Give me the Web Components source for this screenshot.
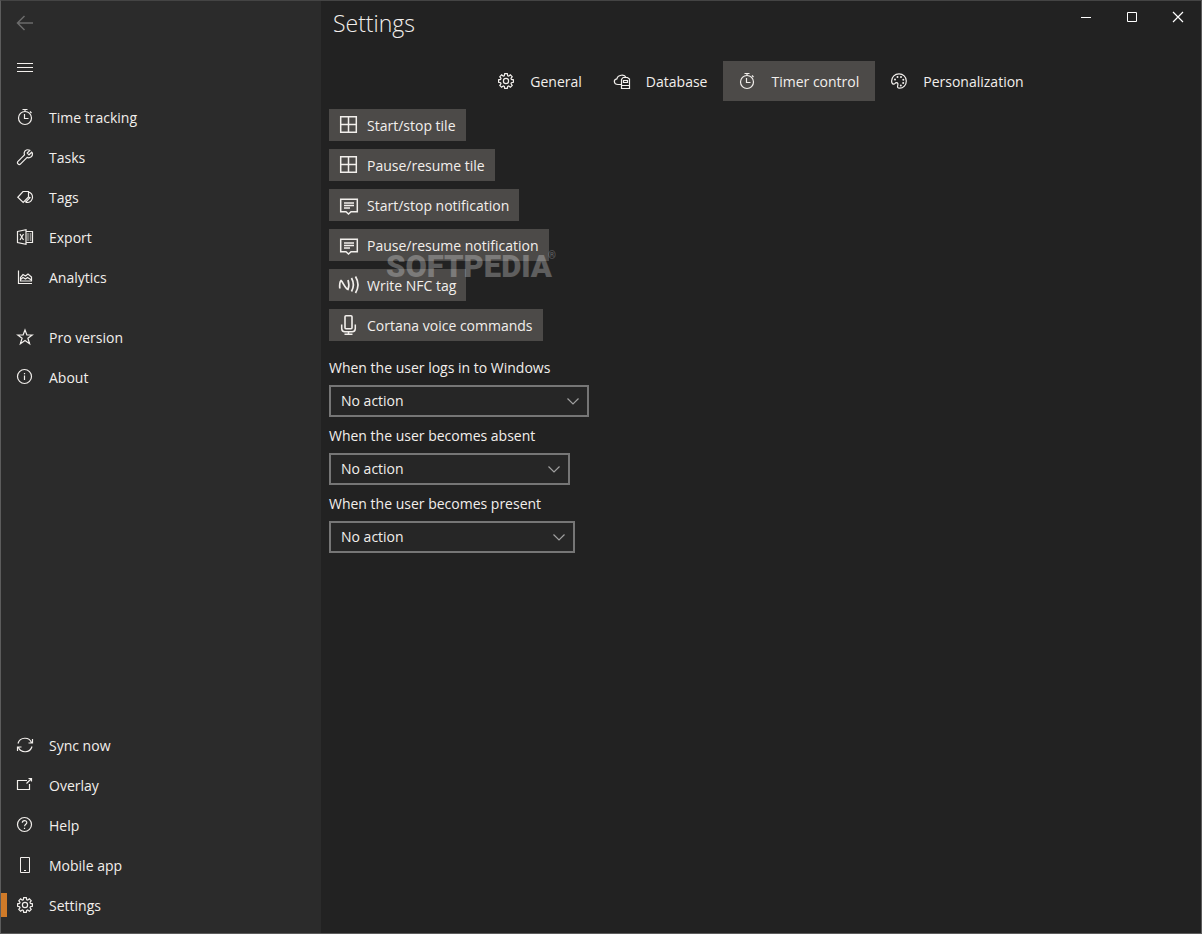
<!DOCTYPE html>
<html lang="en">
<head>
<meta charset="utf-8">
<meta name="viewport" content="width=device-width, initial-scale=1">
<title>Settings</title>
<style>
  body {
    margin: 0;
    color: #f2efec;
    font: 14px/20px "Open Sans", "Noto Sans", sans-serif;
  }
</style>
</head>
<body>

<time-app>
  <side-bar slot="side">
    <nav-item icon="clock">Time tracking</nav-item>
    <nav-item icon="wrench">Tasks</nav-item>
    <nav-item icon="tags">Tags</nav-item>
    <nav-item icon="excel">Export</nav-item>
    <nav-item icon="chart">Analytics</nav-item>
    <nav-item icon="star" class="gap">Pro version</nav-item>
    <nav-item icon="info">About</nav-item>

    <nav-item slot="bottom" icon="sync">Sync now</nav-item>
    <nav-item slot="bottom" icon="overlay">Overlay</nav-item>
    <nav-item slot="bottom" icon="help">Help</nav-item>
    <nav-item slot="bottom" icon="phone">Mobile app</nav-item>
    <nav-item slot="bottom" icon="gear" selected>Settings</nav-item>
  </side-bar>

  <title-bar>Settings</title-bar>

  <tab-bar>
    <tab-item icon="gear">General</tab-item>
    <tab-item icon="database">Database</tab-item>
    <tab-item icon="clock" selected>Timer control</tab-item>
    <tab-item icon="palette">Personalization</tab-item>
  </tab-bar>

  <timer-settings></timer-settings>
</time-app>

<script>

const icons = {
  back: `<path stroke-width="1.500" d="M.5 8H16M7.500 1 .5 8l7 7"/>`,
  menu: `<path stroke-width="1" d="M0 4.500h16M0 8.500h16M0 12.500h16"/>`,
  clock: `<circle cx="8" cy="9" r="6.500"/><path d="M5.500.5h5M8 .5v2M13 2.500l1.500 1.500M7.500 5v4.500h4"/>`,
  wrench: `<path d="M14.700 3.200 12 5.800 10.200 4l2.600-2.700C10.500.1 8 1 7.300 3.300c-.2.9-.1 1.700.2 2.500L1 12.300c-.8.8-.7 1.900 0 2.600s1.900.7 2.600 0l6.500-6.500c2.700 1.200 5.700-.9 5.400-3.600-.1-.6-.3-1.100-.8-1.600z"/>`,
  tags: `<path d="M6 2.500h5.500V8l-5.300 5.500L.8 8.300zM11.500 3c2.200.6 4 2.800 4 5.300 0 2.800-2.200 5-4.600 5.200-1.100 0-2-.3-2.600-1M11.500 8l1.500.7-4.300 4.400"/>`,
  excel: `<path d="M.5 2.500 9 .7v14.600L.5 13.500zM9 2.500h6.500v11H9"/><path d="M3 5l3.500 6M6.500 5 3 11"/><path stroke-width="1.500" opacity=".5" d="M11 4v8M13.500 4v8"/>`,
  chart: `<path d="M1.500 1.500v13H15M3.500 12V8.500L6 5.500 8.500 7 11 5l3.500 3v4z"/><path d="M3.500 10.500 6 8.500l2.500 1.500 2-1.500 4 2.500"/>`,
  star: `<path d="M8 1l1.900 5h5.300l-4.300 3.300 1.700 5.500L8 11.500l-4.600 3.300 1.700-5.500L.8 6h5.300z"/>`,
  info: `<circle cx="7.500" cy="7.500" r="7"/><path d="M7.500 6.500V11M7.500 4v1.200"/>`,
  sync: `<path d="M1 6.500A7.200 7.200 0 0 1 14.700 6M15.500 2v4h-4M15 9.500A7.200 7.200 0 0 1 1.300 10M.5 14v-4h4"/>`,
  overlay: `<path d="M10 3.500H.5v9h12V7M9.500 6.500l5-5M11.500 1.500h3v3"/>`,
  help: `<circle cx="7.500" cy="7.500" r="7"/><path d="M5.300 5.800c.1-3 4.600-2.800 4.500-.1-.1 1.500-2.200 1.800-2.200 3.600M7.500 10.800V12"/>`,
  phone: `<path stroke-width="1" d="M3.500.5h9v15h-9zM7 13.500h2"/>`,
  gear: `<circle cx="8" cy="8" r="2.600"/><path d="M6.700.7h2.600l.4 2 1 .4 1.700-1.200 1.800 1.800-1.200 1.700.4 1 2 .4v2.500l-2 .4-.4 1 1.200 1.700-1.800 1.800-1.700-1.200-1 .4-.4 2H6.700l-.4-2-1-.4-1.700 1.200-1.800-1.800L3 10.700l-.4-1-2-.4V6.800l2-.4.4-1-1.200-1.700 1.800-1.800 1.700 1.200 1-.4z"/>`,
  database: `<path d="M7 11.500H4C-.5 11.500-.8 6.600 2.900 5.900 3.700 1.800 10.500.8 12 4.500M9 4.500h4.500L15.500 6v9.500h-8v-9L9 4.500M7.500 12.500h8M9.500 7.500h4v2h-4z"/>`,
  palette: `<path d="M8 .8c4.100 0 7.300 3 7.300 7.100 0 4.200-3 7.300-6.600 7.300-2.200 0-2.400-1-2-2.500.5-1.800.3-3.100-1.300-3.100-1.700 0-1.200 1.900-2.900 1.600C.9 10.900.6 9.500.6 8 .7 3.800 3.900.8 8 .8z"/><g fill="currentColor" stroke="none"><circle cx="4" cy="6.500" r="1"/><circle cx="6.500" cy="4" r="1"/><circle cx="10" cy="4" r="1"/><circle cx="12.300" cy="6.700" r="1"/><circle cx="12.200" cy="10" r="1"/><circle cx="9.800" cy="12.500" r="1"/></g>`,
  tile: `<path stroke-width="1.500" d="M1.700 1.700h15.600v15.600H1.700zM9.500 2v15M2 9.500h15"/>`,
  message: `<path stroke-width="1.500" d="M1.700 4.200h16.600v12.500H12L9.500 19 7 16.700H1.700zM5 8h10M5 10.500h10M5 13h6"/>`,
  nfc: `<path stroke-width="1.700" d="M.8 13.500C.5 10 1 6.500 2 5.500c2 1.500 4 8 7 9C10 12 10 8 9 5M12.500 3c2.200 4 2.200 9.500 0 13.500M16.500 1.500c3 5 3 11.500 0 16.500"/>`,
  mic: `<rect stroke-width="1.600" x="6" y=".8" width="7" height="13" rx="1"/><path stroke-width="1.500" d="M2.700 9.500v4c0 2 1 3.200 3 3.200h7.600c2 0 3-1.200 3-3.200v-4M9.500 17v2M5.500 19.200h8"/>`,
  minimize: `<path stroke-width="1" d="M0 5.500h10"/>`,
  maximize: `<path stroke-width="1" d="M.5.5h9v9h-9z"/>`,
  close: `<path d="M0 0l10 10M10 0 0 10"/>`,
  chevron: `<path d="M.5.5 6 6l5.500-5.500"/>`
};

// width and height of the drawing area, 16 by 16 when not listed
const sizes = {
  tile: [20, 20],
  message: [20, 20],
  nfc: [20, 20],
  mic: [20, 20],
  minimize: [10, 10],
  maximize: [10, 10],
  close: [10, 10],
  chevron: [12, 7]
};

class AppIcon extends HTMLElement {

  constructor() {
    super();

    this.attachShadow({ mode: 'open' });
  }

  connectedCallback() {
    const name = this.getAttribute('name');
    const [w, h] = sizes[name] || [16, 16];

    this.shadowRoot.innerHTML = `
      <style>
        :host { display: block; flex: none; }
        svg { display: block; overflow: visible; }
      </style>
      <svg width="${w}" height="${h}" viewBox="0 0 ${w} ${h}" fill="none" stroke="currentColor" stroke-width="1.200" aria-hidden="true">
        ${icons[name]}
      </svg>
    `;
  }

}


class TimeApp extends HTMLElement {

  constructor() {
    super();

    this.attachShadow({ mode: 'open' });

    this.shadowRoot.innerHTML = `
      <style>
        :host {
          display: grid;
          grid-template-columns: 320px 1fr;
          box-sizing: border-box;
          min-height: 100vh;
          border: 1px solid #5c5c5c;
          border-top-color: #444;
          background: #222;
        }
        main { min-width: 0; }
      </style>
      <slot name="side"></slot>
      <main><slot></slot></main>
    `;
  }

}


class SideBar extends HTMLElement {

  constructor() {
    super();

    this.attachShadow({ mode: 'open' });

    this.shadowRoot.innerHTML = `
      <style>
        :host {
          display: flex;
          flex-direction: column;
          padding-bottom: 8px;
          background: #2b2b2b;
        }
        button {
          width: 48px;
          height: 44px;
          padding: 0 16px;
          border: 0;
          background: none;
          color: inherit;
        }
        button:disabled { color: #6b6b6b; }
        nav { display: flex; flex-direction: column; flex: 1; padding-top: 8px; }
        .bottom { margin-top: auto; }
        ::slotted(.gap) { margin-top: 20px; }
      </style>
      <button disabled aria-label="Back"><app-icon name="back"></app-icon></button>
      <button aria-label="Menu"><app-icon name="menu"></app-icon></button>
      <nav>
        <slot></slot>
        <div class="bottom"><slot name="bottom"></slot></div>
      </nav>
    `;
  }

}


class NavItem extends HTMLElement {

  constructor() {
    super();

    this.attachShadow({ mode: 'open' });
  }

  connectedCallback() {
    this.shadowRoot.innerHTML = `
      <style>
        :host { display: block; }
        a {
          position: relative;
          display: flex;
          align-items: center;
          gap: 16px;
          height: 40px;
          padding: 0 16px;
          color: inherit;
          text-decoration: none;
        }
        span { padding-top: 2px; }
        :host([selected]) a::before {
          content: "";
          position: absolute;
          left: 0;
          top: 8px;
          width: 6px;
          height: 24px;
          background: #cf7a28;
        }
      </style>
      <a href="#"><app-icon name="${this.getAttribute('icon')}"></app-icon><span><slot></slot></span></a>
    `;
  }

}


class TitleBar extends HTMLElement {

  constructor() {
    super();

    this.attachShadow({ mode: 'open' });

    this.shadowRoot.innerHTML = `
      <style>
        :host { display: flex; align-items: flex-start; margin-bottom: 16px; }
        h1 {
          flex: 1;
          margin: 0;
          padding-left: 12px;
          font-size: 23px;
          font-weight: 300;
          line-height: 44px;
        }
        button {
          display: grid;
          place-items: center;
          width: 46px;
          height: 32px;
          padding: 0;
          border: 0;
          background: none;
          color: #fff;
        }
      </style>
      <h1><slot></slot></h1>
      <button aria-label="Minimize"><app-icon name="minimize"></app-icon></button>
      <button aria-label="Maximize"><app-icon name="maximize"></app-icon></button>
      <button aria-label="Close"><app-icon name="close"></app-icon></button>
    `;
  }

}


class TabBar extends HTMLElement {

  constructor() {
    super();

    this.attachShadow({ mode: 'open' });

    this.shadowRoot.innerHTML = `
      <style>
        :host { display: flex; justify-content: center; }
      </style>
      <slot></slot>
    `;
  }

}


class TabItem extends HTMLElement {

  constructor() {
    super();

    this.attachShadow({ mode: 'open' });
  }

  connectedCallback() {
    this.shadowRoot.innerHTML = `
      <style>
        :host { display: block; }
        button {
          display: flex;
          align-items: center;
          gap: 16px;
          height: 40px;
          padding: 0 16px;
          border: 0;
          background: none;
          color: inherit;
          font: inherit;
        }
        span { padding-top: 2px; }
        :host([selected]) button { background: #4c4a48; }
      </style>
      <button><app-icon name="${this.getAttribute('icon')}"></app-icon><span><slot></slot></span></button>
    `;
  }

}


class ActionButton extends HTMLElement {

  constructor() {
    super();

    this.attachShadow({ mode: 'open' });
  }

  connectedCallback() {
    this.shadowRoot.innerHTML = `
      <style>
        :host { display: block; }
        button {
          display: flex;
          align-items: center;
          gap: 8px;
          height: 32px;
          padding: 0 10px;
          border: 0;
          background: #4c4a48;
          color: inherit;
          font: inherit;
        }
        span { padding-top: 2px; }
      </style>
      <button><app-icon name="${this.getAttribute('icon')}"></app-icon><span><slot></slot></span></button>
    `;
  }

}


class SelectField extends HTMLElement {

  constructor() {
    super();

    this.attachShadow({ mode: 'open' });
  }

  connectedCallback() {
    this.shadowRoot.innerHTML = `
      <style>
        :host { display: grid; gap: 7px; }
        label { padding-top: 1px; }
        .box { display: grid; align-items: center; width: var(--field-width, 260px); }
        select, app-icon { grid-area: 1 / 1; }
        select {
          appearance: none;
          box-sizing: border-box;
          width: 100%;
          height: 32px;
          padding: 0 32px 0 10px;
          border: 2px solid #767676;
          border-radius: 0;
          background: #262626;
          color: inherit;
          font: inherit;
        }
        app-icon {
          justify-self: end;
          margin-right: 10px;
          color: #a0a0a0;
          pointer-events: none;
        }
      </style>
      <label for="action">${this.getAttribute('label')}</label>
      <div class="box">
        <select id="action"><option>No action</option></select>
        <app-icon name="chevron"></app-icon>
      </div>
    `;
  }

}


class WaterMark extends HTMLElement {

  constructor() {
    super();

    this.attachShadow({ mode: 'open' });

    this.shadowRoot.innerHTML = `
      <style>
        :host {
          display: flex;
          align-items: flex-start;
          color: #fff;
          opacity: .27;
          font: 900 31px/32px Roboto, sans-serif;
          pointer-events: none;
        }
        small { margin-left: -4px; font-size: 10px; line-height: 10px; font-weight: 400; }
      </style>
      <span>SOFTPEDIA</span><small>®</small>
    `;
  }

}


class TimerSettings extends HTMLElement {

  constructor() {
    super();

    this.attachShadow({ mode: 'open' });

    this.shadowRoot.innerHTML = `
      <style>
        :host { display: block; position: relative; padding: 8px; }
        .stack { display: flex; flex-direction: column; align-items: flex-start; gap: 8px; }
        .fields { margin-top: 16px; }
        .absent { --field-width: 241px; }
        .present { --field-width: 246px; }
        water-mark { position: absolute; left: 65px; top: 150px; }
      </style>
      <div class="stack">
        <action-button icon="tile">Start/stop tile</action-button>
        <action-button icon="tile">Pause/resume tile</action-button>
        <action-button icon="message">Start/stop notification</action-button>
        <action-button icon="message">Pause/resume notification</action-button>
        <action-button icon="nfc">Write NFC tag</action-button>
        <action-button icon="mic">Cortana voice commands</action-button>
      </div>
      <div class="stack fields">
        <select-field label="When the user logs in to Windows"></select-field>
        <select-field class="absent" label="When the user becomes absent"></select-field>
        <select-field class="present" label="When the user becomes present"></select-field>
      </div>
      <water-mark></water-mark>
    `;
  }

}


window.customElements.define('app-icon', AppIcon);
window.customElements.define('time-app', TimeApp);
window.customElements.define('side-bar', SideBar);
window.customElements.define('nav-item', NavItem);
window.customElements.define('title-bar', TitleBar);
window.customElements.define('tab-bar', TabBar);
window.customElements.define('tab-item', TabItem);
window.customElements.define('action-button', ActionButton);
window.customElements.define('select-field', SelectField);
window.customElements.define('water-mark', WaterMark);
window.customElements.define('timer-settings', TimerSettings);

</script>
</body>
</html>
